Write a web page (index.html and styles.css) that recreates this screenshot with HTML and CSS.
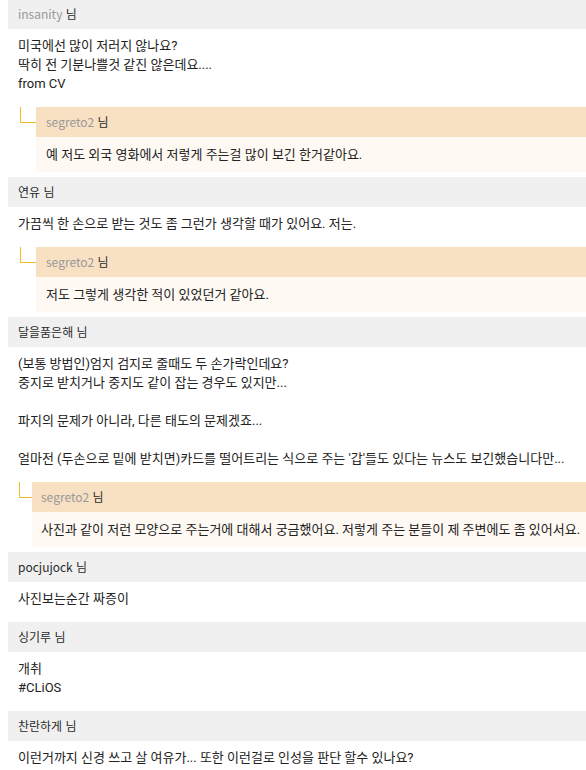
FILE: index.html
```html
<!DOCTYPE html>
<html lang="ko">
<head>
<meta charset="utf-8">
<link rel="stylesheet" href="styles.css">
</head>
<body>
<div class="list">
  <div class="comment">
    <div class="head"><span class="nick muted">insanity</span> 님</div>
    <div class="body">미국에선 많이 저러지 않나요?<br>딱히 전 기분나쁠것 같진 않은데요....<br>from CV</div>
    <div class="reply">
      <div class="conn"></div>
      <div class="rbox">
        <div class="rhead"><span class="nick muted">segreto2</span> 님</div>
        <div class="rbody">예 저도 외국 영화에서 저렇게 주는걸 많이 보긴 한거같아요.</div>
      </div>
    </div>
  </div>

  <div class="comment">
    <div class="head"><span class="nick">연유</span> 님</div>
    <div class="body">가끔씩 한 손으로 받는 것도 좀 그런가 생각할 때가 있어요. 저는.</div>
    <div class="reply">
      <div class="conn"></div>
      <div class="rbox">
        <div class="rhead"><span class="nick muted">segreto2</span> 님</div>
        <div class="rbody">저도 그렇게 생각한 적이 있었던거 같아요.</div>
      </div>
    </div>
  </div>

  <div class="comment">
    <div class="head"><span class="nick">달을품은해</span> 님</div>
    <div class="body">(보통 방법인)엄지 검지로 줄때도 두 손가락인데요?<br>중지로 받치거나 중지도 같이 잡는 경우도 있지만...<br><br>파지의 문제가 아니라, 다른 태도의 문제겠죠...<br><br>얼마전 (두손으로 밑에 받치면)카드를 떨어트리는 식으로 주는 '갑'들도 있다는 뉴스도 보긴했습니다만...</div>
    <div class="reply reply-wide">
      <div class="conn"></div>
      <div class="rbox">
        <div class="rhead"><span class="nick muted">segreto2</span> 님</div>
        <div class="rbody">사진과 같이 저런 모양으로 주는거에 대해서 궁금했어요. 저렇게 주는 분들이 제 주변에도 좀 있어서요.</div>
      </div>
    </div>
  </div>

  <div class="comment">
    <div class="head"><span class="nick">pocjujock</span> 님</div>
    <div class="body">사진보는순간 짜증이</div>
  </div>

  <div class="comment">
    <div class="head"><span class="nick">싱기루</span> 님</div>
    <div class="body">개취<br>#CLiOS</div>
  </div>

  <div class="comment">
    <div class="head"><span class="nick">찬란하게</span> 님</div>
    <div class="body">이런거까지 신경 쓰고 살 여유가... 또한 이런걸로 인성을 판단 할수 있나요?</div>
  </div>
</div>
</body>
</html>
```

FILE: styles.css
```css
html, body {
  margin: 0;
  padding: 0;
  background: #ffffff;
  overflow: hidden;
}

body {
  padding-left: 8px;
  font-family: Roboto, "Noto Sans CJK KR", sans-serif;
  font-size: 13px;
  color: #222222;
}

.list {
  width: 578px;
  margin-top: -1px;
}

.head {
  height: 30px;
  line-height: 30px;
  padding-left: 10px;
  background: #f0f0f0;
  font-family: "Noto Sans CJK KR", sans-serif;
  font-size: 12px;
  color: #2a2a2a;
  white-space: nowrap;
}

.nick.muted {
  color: #999999;
}

.body {
  padding: 7px 10px 14px;
  line-height: 19px;
  white-space: nowrap;
}

.reply {
  display: flex;
  padding-left: 12px;
  margin-bottom: 5px;
}

.conn {
  flex: none;
  width: 16px;
  height: 16px;
  box-sizing: border-box;
  border-left: 1px solid #f3bd2a;
  border-bottom: 1px solid #f3bd2a;
}

.rbox {
  flex: 1;
  min-width: 0;
}

.rhead {
  height: 30px;
  line-height: 30px;
  padding-left: 10px;
  background: #f8e0c3;
  font-family: "Noto Sans CJK KR", sans-serif;
  font-size: 12px;
  color: #2a2a2a;
  white-space: nowrap;
}

.rbody {
  padding: 8px 10px;
  line-height: 19px;
  background: #fef9f3;
  white-space: nowrap;
}

.reply-wide {
  padding-left: 11px;
}

.reply-wide .conn {
  width: 13px;
}

.reply-wide .rhead,
.reply-wide .rbody {
  padding-left: 9px;
}
```
